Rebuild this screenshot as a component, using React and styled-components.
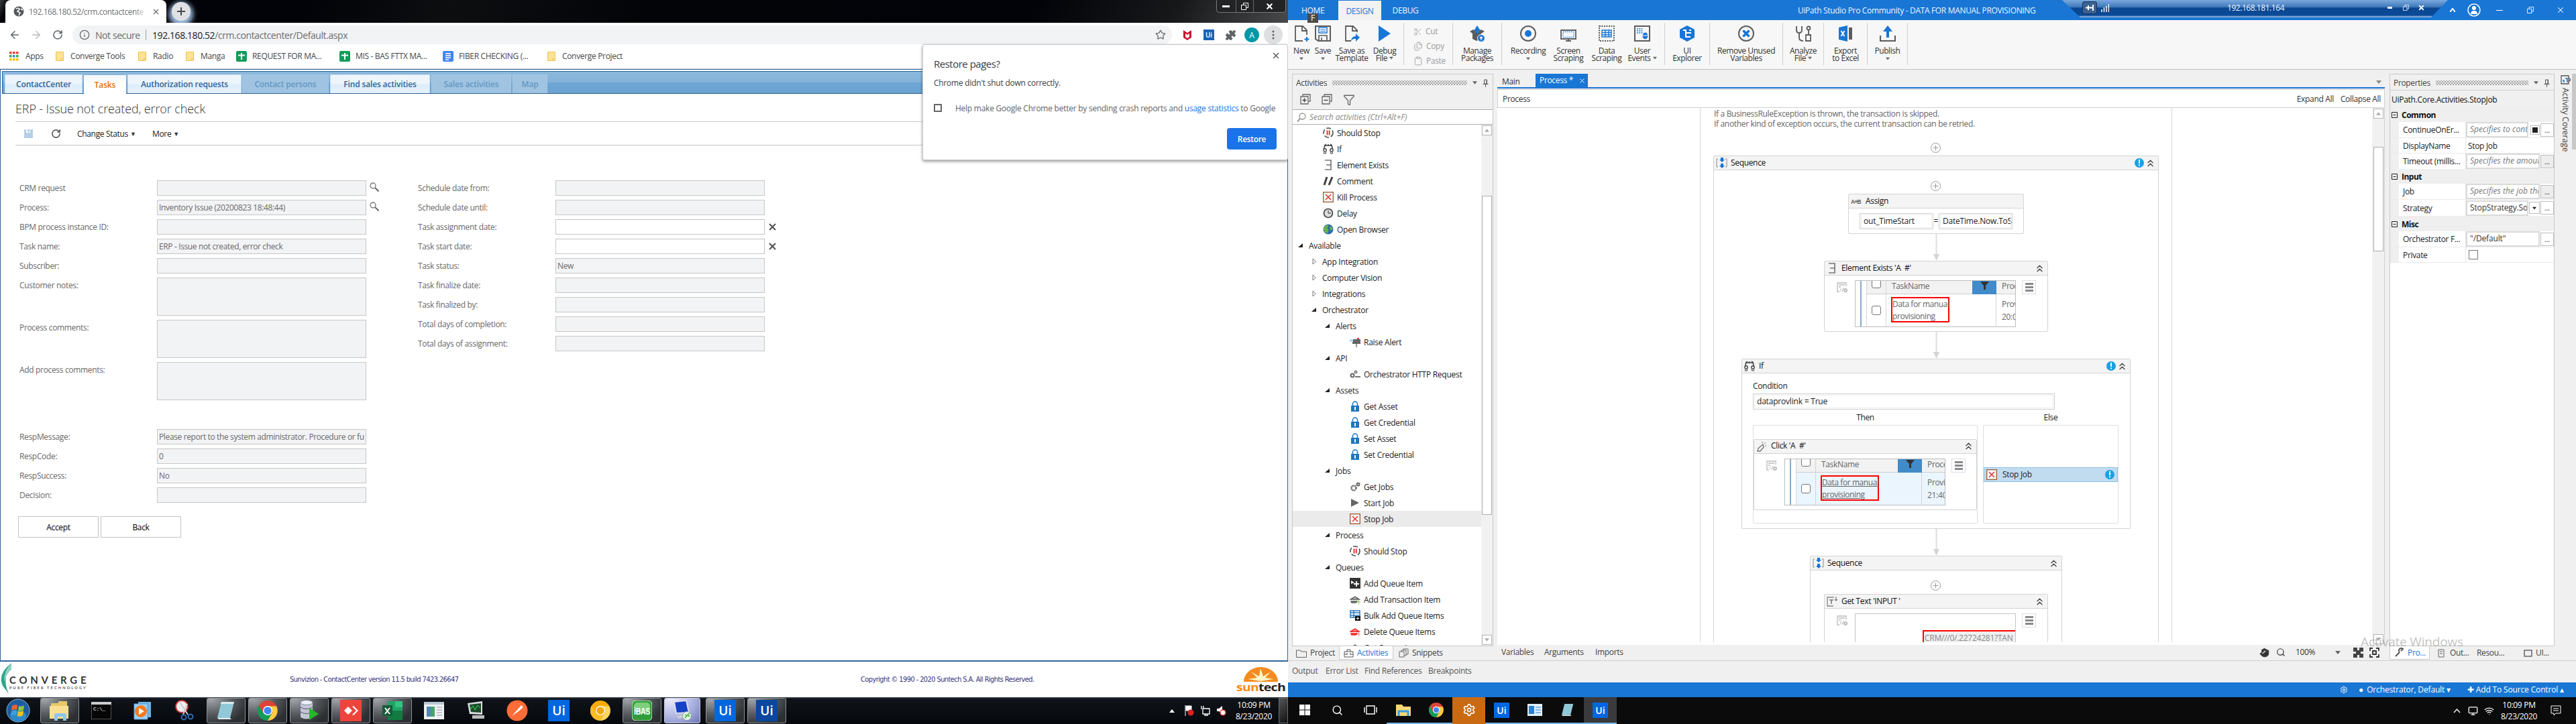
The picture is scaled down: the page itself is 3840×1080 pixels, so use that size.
import React from "react";
import styled, { createGlobalStyle, css } from "styled-components";
import { ArrowLeft, ArrowRight, RotateCw, Star, Puzzle, Search, Scissors, Files, Clipboard, Filter, X, Info, ChevronsUp, Settings, Hand, Wifi, Monitor } from "lucide-react";

const Global = createGlobalStyle`
  *{box-sizing:border-box}
  body{margin:0;background:#fff;width:3840px;height:1080px;overflow:hidden;
    font-family:"Open Sans","Noto Sans",sans-serif;font-size:12px;letter-spacing:-.33px;color:#222}
  svg{display:block;flex:none}
`;

const Screens = styled.div`display:flex;width:3840px;height:1080px;overflow:hidden;white-space:nowrap;`;
const Desktop = styled.div`position:relative;width:1920px;height:1080px;display:flex;flex-direction:column;overflow:hidden;`;

/* ---------- browser ---------- */
const TabStrip = styled.div`
  height:34px;flex:none;display:flex;padding-left:8px;
  background:linear-gradient(115deg,#3a3b3d 0,#020308 14px,#020308 24%,#0d0e10 35%,#030408 50%,#020308 80%,#17181a 91%,#48494b 100%);
`;
const BrowserTab = styled.div`
  width:240px;height:34px;background:#fff;border-radius:8px 8px 0 0;display:flex;align-items:center;padding-left:12px;color:#6a6d70;
`;
const TabTitle = styled.div`
  width:176px;margin:0 7px;overflow:hidden;letter-spacing:-.5px;
  mask-image:linear-gradient(90deg,#000 90%,transparent);
`;
const NewTab = styled.div`
  width:28px;height:28px;margin:3px 0 0 8px;border-radius:50%;background:#dfe1e4;display:grid;place-items:center;box-shadow:0 4px 7px 4px #9dbbe0;
`;
const WinControls = styled.div`
  display:flex;margin-left:auto;margin-right:3px;width:104px;height:19px;border:1px solid #77797b;border-top:0;border-radius:0 0 5px 5px;background:#222325;
`;
const WinBtn = styled.div`
  width:${p => p.$w}px;display:grid;place-items:center;border-right:1px solid #66686a;&:last-child{border:0}
`;
const Toolbar = styled.div`height:36px;flex:none;display:flex;align-items:center;padding-left:6px;background:#fff;`;
const ToolCell = styled.div`width:32px;height:28px;display:grid;place-items:center;color:${p => p.$c || "#5f6368"};`;
const Address = styled.div`
  width:1639px;height:28px;margin:0 7px 0 6px;border-radius:14px;background:#f1f3f4;display:flex;align-items:center;padding:0 9px 0 10px;font-size:14px;color:#6a6e72;letter-spacing:-.42px;
  b{font-weight:400;color:#202124} span{width:66px;margin-left:8px} i{width:1px;height:16px;background:#9aa0a6;margin:0 9px 0 9px} svg:last-child{margin-left:auto}
`;
const Avatar = styled.div`width:22px;height:22px;border-radius:50%;background:#0097a7;color:#fff;display:grid;place-items:center;font-size:12px;`;
const MenuDots = styled.div`width:28px;height:28px;border-radius:50%;background:#dedfe0;display:grid;place-items:center;`;
const Bookmarks = styled.div`height:33px;flex:none;padding:0 0 5px 14px;display:flex;align-items:center;border-bottom:1px solid #d4d6d9;background:#fff;color:#45484c;`;
const Bookmark = styled.div`width:${p => p.$w}px;display:flex;align-items:center;gap:${p => p.$g || 8}px;`;
const UiBadge = styled.div`
  width:${p => p.$s}px;height:${p => p.$s}px;background:${p => p.$bg || "#0067df"};color:#fff;display:grid;place-items:center;
  font:600 ${p => Math.round(p.$s * .6)}px "Open Sans",sans-serif;letter-spacing:0;
`;

const Popup = styled.div`
  position:absolute;left:1375px;top:66px;width:545px;height:173px;background:#fff;border:1px solid #c4c6c9;border-radius:3px;box-shadow:0 2px 4px rgba(0,0,0,.4);
  padding:18px 16px 0 16px;display:flex;flex-direction:column;
`;
const PopTitle = styled.div`font-size:15px;letter-spacing:-.5px;line-height:20px;color:#3a3c40;display:flex;justify-content:space-between;svg{margin:-9px -6px 0 0}`;
const PopText = styled.div`margin-top:10px;line-height:17px;color:#3c4043;letter-spacing:-.24px;`;
const PopCheck = styled.div`margin-top:20px;display:flex;align-items:center;gap:20px;color:#5f6368;height:18px;letter-spacing:-.25px;a{color:#1a73e8}`;
const Box = styled.div`width:${p => p.$s || 12}px;height:${p => p.$s || 12}px;border:${p => p.$b || 2}px solid ${p => p.$c || "#767676"};border-radius:${p => p.$r || 0}px;background:#fff;flex:none;`;
const RestoreBtn = styled.div`align-self:flex-end;margin-top:21px;width:74px;height:32px;border-radius:4px;background:#1a73e8;color:#fff;font-weight:600;display:grid;place-items:center;`;

/* ---------- CRM page ---------- */
const Page = styled.div`height:884px;flex:none;border:1px solid #31659c;border-bottom:2px solid #31659c;padding:2px 2px 0;background:#fff;`;
const Nav = styled.div`
  position:relative;height:34px;border:1px solid #2f6394;display:flex;align-items:flex-end;padding-left:3px;
  background:linear-gradient(#8cb8dc,#84b2d9 48%,#6da6d4 52%,#6ba3d1);
  font:600 12px "Open Sans",sans-serif;letter-spacing:-.15px;
`;
const NavTab = styled.div`
  width:${p => p.$w}px;height:28px;margin-right:${p => p.$m || 2}px;display:grid;place-items:center;
  ${p => p.$kind === "off" ? css`background:#9fc3e1;color:#6598c2;border:1px solid #a8c9e5;border-bottom:0;`
    : p.$kind === "on" ? css`background:linear-gradient(#f2f6f9,#fff 50%);color:#e0720c;margin-bottom:-1px;`
    : css`background:linear-gradient(#edf5fb 45%,#dcedfb 55%,#e6f2fc);color:#2d6698;border:1px solid #c4def3;border-bottom:0;`}
`;
const PageTitle = styled.div`height:42px;margin:0 16px 0 20px;padding-top:8px;border-bottom:1px solid #c8c8c8;font-size:18px;line-height:28px;font-weight:300;letter-spacing:-.12px;color:#333;`;
const Actions = styled.div`height:35px;margin:0 16px 0 20px;padding-left:13px;border-bottom:1px solid #c8c8c8;display:flex;align-items:center;color:#222;span{font-size:9px;color:#333}`;
const Action = styled.div`width:${p => p.$w}px;display:flex;align-items:center;gap:3px;`;
const Form = styled.div`display:flex;padding:52px 0 0 26px;color:#686868;letter-spacing:-.33px;`;
const FormCol = styled.div`width:594px;`;
const Row = styled.div`height:${p => p.$h || 22}px;margin-bottom:${p => p.$mb || 7}px;display:grid;grid-template-columns:205px 312px 30px;line-height:23px;`;
const Field = styled.div`border:1px solid #c6c6c6;background:${p => (p.$open ? "#fff" : "#f2f3f5")};padding-left:2px;line-height:21px;overflow:hidden;color:#6a6a6a;letter-spacing:-.37px;`;
const Side = styled.div`padding:${p => (p.$x ? "6px 0 0 6px" : "3px 0 0 5px")};`;
const Buttons = styled.div`display:flex;gap:3px;padding:14px 0 0 24px;`;
const Button = styled.div`width:120px;height:32px;border:1px solid #c4c4c4;background:#fff;color:#000;display:grid;place-items:center;`;
const Footer = styled.div`
  height:53px;flex:none;display:grid;grid-template-columns:432px 851px 560px auto;align-items:center;background:#fff;
  font:11px "DejaVu Sans Condensed","DejaVu Sans",sans-serif;letter-spacing:-.6px;color:#34347c;
`;

/* ---------- taskbars ---------- */
const Win7Bar = styled.div`height:40px;flex:none;display:flex;background:linear-gradient(#3d4650 0,#3d4650 1px,#10141a 2px,#05090d 100%);color:#fff;`;
const Task = styled.div`
  width:62px;height:40px;padding:1px 2px;
  >div{height:38px;border-radius:3px;display:grid;place-items:center;
  ${p => p.$on && css`background:radial-gradient(ellipse at 10% 0,#a5a9ad,#585c60 45%,#2c3033 80%);border:1px solid #8d9296;`}
  ${p => p.$bright && css`background:radial-gradient(ellipse at 20% 0,#eef,#a7aede 60%,#6d76b5);border:1px solid #ccd;width:54px;`}}
`;
const StartCell = styled.div`width:58px;display:grid;place-items:center;padding-right:4px;`;
const Tray = styled.div`margin-left:auto;display:flex;align-items:center;`;
const TrayCell = styled.div`width:${p => p.$w || 24}px;display:grid;place-items:center;font-size:9px;`;
const Clock = styled.div`width:${p => p.$w || 74}px;text-align:center;line-height:17px;letter-spacing:-.3px;color:#fff;`;
const ShowDesk = styled.div`width:14px;height:38px;border:1px solid #6a6f75;background:linear-gradient(135deg,#555,#111);`;
const Win10Bar = styled.div`height:40px;flex:none;display:flex;background:#0b0b0c;color:#fff;`;
const Cell10 = styled.div`width:49px;height:40px;display:grid;place-items:center;background:${p => p.$bg || "none"};border-bottom:2px solid ${p => (p.$run ? "#76b9ed" : "transparent")};`;

/* ---------- studio ---------- */
const TitleBar = styled.div`position:relative;height:30px;flex:none;background:#1976d4;color:#eef5fd;display:flex;padding-left:20px;line-height:31px;>*{flex:none}`;
const Menu = styled.div`
  width:${p => p.$w}px;text-align:center;letter-spacing:-.35px;
  ${p => p.$on && css`background:#f2f2f2;color:#1976d4;margin-top:1px;`}
`;
const KeyTip = styled.div`position:absolute;left:29px;top:20px;width:16px;height:14px;background:#4b4b4b;color:#fff;line-height:14px;text-align:center;z-index:2;`;
const AppTitle = styled.div`margin-left:557px;width:360px;letter-spacing:-.33px;`;
const RdpBar = styled.div`
  margin-left:34px;width:575px;height:26px;
  clip-path:polygon(0 0,100% 0,550px 26px,27px 26px);
  background:linear-gradient(#7aa9dd,#3f78bb 40%,#0b4790 46%,#0a4a98 88%,#8fb0d8 96%);
  display:flex;align-items:center;line-height:24px;padding-left:30px;padding-bottom:3px;>*{flex:none}
`;
const PinBtn = styled.div`width:22px;height:19px;border:1px solid #1b3157;border-radius:3px;background:#3b618f;display:grid;place-items:center;margin-right:6px;`;
const RdpText = styled.div`width:82px;margin:0 144px 0 176px;letter-spacing:-.45px;`;
const Caption = styled.div`width:${p => p.$w}px;display:grid;place-items:center;color:#fff;`;

const Ribbon = styled.div`height:74px;flex:none;background:#f7f7f7;border-bottom:1px solid #c0c0c0;display:flex;padding:4px 0 0 5px;`;
const Tool = styled.div`
  width:${p => p.$w}px;margin:${p => p.$m || 0};height:60px;display:flex;flex-direction:column;align-items:center;color:#333;line-height:11px;text-align:center;letter-spacing:-.42px;
  >svg{height:24px;margin:4px 0 8px}
  small{padding-top:4px}
`;
const ToolLine = styled.div`display:flex;align-items:center;justify-content:center;gap:3px;`;
const Rule = styled.div`width:1px;height:63px;background:#cfcfcf;margin-left:${p => p.$ml || 0}px;`;
const EditGroup = styled.div`width:72px;padding:2px 0 0 13px;color:#9b9b9b;div{display:flex;align-items:center;gap:5px;height:22px;margin-left:1px;line-height:20px}`;
const Work = styled.div`height:881px;flex:none;background:#f0f0f0;display:flex;padding:6px 0 0 6px;`;
const Panel = styled.div`width:${p => p.$w}px;height:875px;display:flex;flex-direction:column;`;
const PanelBody = styled.div`border:1px solid #c9c9c9;height:854px;display:flex;flex-direction:column;overflow:hidden;background:${p => p.$bg || "#f0f0f0"};`;
const PanelHead = styled.div`height:23px;flex:none;display:flex;align-items:center;padding:2px 6px 0 5px;background:#f0f0f0;color:#444;gap:8px;`;
const Dots = styled.div`flex:1;height:7px;background:radial-gradient(#a4a4a4 .8px,transparent 1px) 0 0/4px 4px,radial-gradient(#a4a4a4 .8px,transparent 1px) 2px 2px/4px 4px;`;
const ActTools = styled.div`height:30px;flex:none;display:flex;align-items:center;gap:15px;padding-left:11px;border-bottom:1px solid #adadad;`;
const SearchBox = styled.div`height:22px;flex:none;display:flex;align-items:center;gap:5px;padding-left:6px;background:#fff;border-bottom:1px solid #adadad;color:#8a8a8a;font-style:italic;letter-spacing:-.05px;`;
const TreeWrap = styled.div`flex:1;display:flex;background:#fff;overflow:hidden;`;
const Tree = styled.div`width:281px;color:#1d1d1d;letter-spacing:-.27px;`;
const Node = styled.div`height:24px;display:flex;align-items:center;padding-left:${p => p.$x}px;background:${p => (p.$on ? "#ebebeb" : "none")};`;
const Glyph = styled.div`width:${p => p.$w}px;height:16px;display:flex;align-items:center;`;
const Scroll = styled.div`width:${p => p.$w || 17}px;background:#f1f1f1;display:flex;flex-direction:column;align-items:center;padding:1px 0;`;
const ScrollBtn = styled.div`width:15px;height:15px;border:1px solid #b4b4b4;background:#fff;display:grid;place-items:center;margin-top:${p => p.$mt || 0};`;
const Thumb = styled.div`width:15px;height:${p => p.$h}px;margin-top:${p => p.$mt}px;border:1px solid #adadad;background:#fff;`;
const Tabs = styled.div`height:20px;display:flex;line-height:20px;color:#444;`;
const BTab = styled.div`width:${p => p.$w}px;display:flex;align-items:center;gap:5px;padding-left:${p => p.$pl || 6}px;${p => p.$on && css`background:#fff;color:#1976d4;border:1px solid #c9c9c9;border-top:0;`}`;

const Center = styled.div`width:1323px;margin-left:6px;display:flex;flex-direction:column;`;
const DocTabs = styled.div`height:22px;border-bottom:2px solid #1976d4;display:flex;line-height:24px;color:#333;`;
const DocTab = styled.div`width:78px;background:#1976d4;color:#fff;display:flex;align-items:center;padding-left:6px;gap:8px;line-height:20px;`;
const Crumb = styled.div`height:28px;flex:none;margin-top:1px;background:#fff;border:1px solid #d0d0d0;display:flex;align-items:center;padding:0 5px 0 7px;color:#333;gap:10px;span{flex:1}`;
const CanvasWrap = styled.div`height:801px;flex:none;display:flex;background:#fff;border-right:1px solid #d0d0d0;`;
const Canvas = styled.div`width:1305px;height:797px;overflow:hidden;padding-left:302px;`;
const Frame = styled.div`width:704px;height:900px;border:1px solid #d6d6d6;border-width:0 1px;display:flex;flex-direction:column;align-items:center;color:#222;`;
const Note = styled.div`align-self:flex-start;margin-left:20px;height:31px;padding-top:1px;line-height:15px;color:#666;`;
const PlusWrap = styled.div`padding:${p => p.$t}px 0 ${p => p.$b}px;height:${p => p.$t + p.$b + 15}px;margin-left:-2px;`;
const Card = styled.div`width:${p => p.$w}px;height:${p => p.$h}px;flex:none;border:1px solid #d3d3d3;border-radius:2px;background:#fff;`;
const CardHead = styled.div`
  height:21px;display:flex;align-items:center;background:#f4f4f4;border-bottom:1px solid #d3d3d3;padding:0 3px;color:#111;
  >span{flex:1;padding-bottom:2px;white-space:pre}
`;
const CardIcon = styled.div`width:${p => p.$w || 22}px;`;
const CardCol = styled.div`display:flex;flex-direction:column;align-items:center;`;
const Expr = styled.div`width:${p => p.$w}px;height:24px;border:1px solid #cfcfcf;outline:1px solid #ededed;outline-offset:-3px;line-height:21px;padding:0 5px;background:#fff;overflow:hidden;letter-spacing:-.2px;`;
const AssignRow = styled.div`display:flex;padding:7px 0 0 16px;line-height:24px;span{width:8px;text-align:center;letter-spacing:0}`;
const ShotRow = styled.div`display:flex;padding:7px 0 0 18px;`;
const ShotToolBox = styled.div`padding-top:3px;`;
const Shot = styled.div`
  width:240px;height:${p => p.$h || 70}px;margin:0 9px 0 11px;border:1px solid #bdbdbd;overflow:hidden;color:#666;
  display:grid;grid-template-columns:9px 8px 29px ${p => p.$c || 128}px 36px 40px;grid-template-rows:20px 50px;
`;
const SCell = styled.div`
  border-right:${p => (p.$nb ? 0 : 1)}px solid #d5d5d5;padding:${p => p.$pt || 0}px 0 0 ${p => p.$p || 0}px;line-height:19px;overflow:hidden;
  ${p => p.$hd && css`background:#f2f2f2;border-bottom:1px solid #cdcdcd;line-height:15px;`}
  ${p => p.$tint && css`background:#eaf5fe;`}
  ${p => p.$edge && css`border-right:2px solid #87aac8;`}
  ${p => p.$flt && css`background:#428bca;display:flex;justify-content:center;border:0;`}
`;
const Tick = styled(Box)`margin-top:${p => p.$mt}px;`;
const RedBox = styled.div`width:87px;height:38px;margin-top:4px;border:2px solid #f00;line-height:18px;margin-left:-1px;text-decoration:${p => (p.$u ? "underline" : "none")};letter-spacing:-.42px;`;
const Burger = styled.div`width:21px;height:21px;border:1px solid #dcdce6;display:flex;flex-direction:column;justify-content:center;align-items:center;gap:2px;i{width:12px;height:3px;background:#888}`;
const IfBody = styled.div`padding:11px 16px 0;`;
const CondLabel = styled.div`height:19px;line-height:16px;`;
const Branches = styled.div`display:grid;grid-template-columns:335px 202px;gap:8px;text-align:center;line-height:23px;`;
const Branch = styled.div`height:147px;border:1px solid #dedede;border-radius:2px;text-align:left;display:flex;flex-direction:column;justify-content:center;`;
const StopCard = styled.div`height:22px;background:#c1dcef;border:1px solid #8fc1e6;display:flex;align-items:center;padding:0 3px;span{flex:1;padding-left:8px}`;
const ZoomBar = styled.div`display:flex;align-items:center;margin-left:auto;padding-right:8px;color:#333;`;
const ZItem = styled.div`width:${p => p.$w}px;line-height:20px;`;
const InputShot = styled.div`width:240px;height:90px;margin:0 9px 0 11px;border:1px solid #c4c4c4;overflow:hidden;padding:24px 0 0 100px;`;
const RedInput = styled.div`width:200px;height:60px;border:2px solid #f00;background:#efefef;color:#888;padding-left:1px;line-height:19px;letter-spacing:-.25px;`;

const PropHead = styled.div`height:26px;flex:none;padding-left:2px;line-height:27px;border-top:1px solid #d0d0d0;background:#f0f0f0;color:#111;letter-spacing:-.28px;`;
const Cat = styled.div`height:${p => p.$h}px;background:#efefef;display:flex;align-items:center;gap:6px;padding-left:2px;font-weight:700;color:#111;letter-spacing:-.5px;`;
const Prop = styled.div`
  height:${p => p.$h}px;display:grid;grid-template-columns:13px 100px 1fr;background:#fff;align-items:center;color:#222;
  >div{height:100%;display:flex;align-items:center;border-bottom:1px solid #ebebeb;}
  >div:first-child{background:#efefef} >div:nth-child(2){padding-left:6px;border-right:1px solid #e6e6e6}
`;
const PText = styled.span`padding-left:3px;`;
const PInput = styled.div`flex:1;height:23px;border:2px solid #dadada;background:#fff;line-height:18px;padding-left:4px;overflow:hidden;width:0;color:#333;letter-spacing:-.15px;${p => p.$ph && css`font-style:italic;color:#777;letter-spacing:.05px;`}`;
const PBtn = styled.div`width:${p => p.$w || 20}px;height:${p => p.$h || 20}px;border:1px solid #bdbdbd;background:${p => p.$bg || "#fff"};display:grid;place-items:center;margin-left:${p => p.$ml || 1}px;font-size:10px;letter-spacing:0;line-height:12px;`;
const SideDock = styled.div`margin-left:auto;width:33px;display:flex;`;
const Vertical = styled.div`width:26px;padding:2px 0 0 9px;div{writing-mode:vertical-rl;margin-top:5px;line-height:15px;color:#444;letter-spacing:0}`;
const DockStrip = styled.div`width:7px;height:113px;background:#c8c8c8;`;
const Watermark = styled.div`position:absolute;left:1599px;top:944px;font-size:19px;color:rgba(120,120,120,.45);letter-spacing:-.2px;`;
const OutTabs = styled.div`height:33px;flex:none;display:flex;padding:5px 0 0 6px;border-top:1px solid #cfcfcf;background:#f0f0f0;color:#555;letter-spacing:-.25px;line-height:19px;`;
const OutTab = styled.div`width:${p => p.$w}px;`;
const Status = styled.div`height:22px;flex:none;background:#1976d4;color:#fff;display:flex;justify-content:flex-end;align-items:center;line-height:22px;padding-right:18px;letter-spacing:-.15px;`;
const StatusItem = styled.span`margin-left:${p => p.$ml}px;`;

/* ---------- small drawings ---------- */
const S = ({ w = 16, h = w, vb, children, ...r }) => <svg width={w} height={h} viewBox={vb || `0 0 ${w} ${h}`} fill="none" {...r}>{children}</svg>;
const Folder = () => <S w={12} h={14}><path d="M.5.5h11v13H.5z" fill="#fde293" stroke="#eac54f" /><path d="M8 13.500v-3h3.500" stroke="#eac54f" /></S>;
const Sheet = () => <S w={16}><rect width="16" height="16" rx="2" fill="#0f9d58" /><path d="M8 3v10M3 6.500h10" stroke="#fff" strokeWidth="2" /></S>;
const DocIcon = () => <S w={16}><rect width="16" height="16" rx="2" fill="#4285f4" /><path d="M4 4h8M4 7h8M4 10h8M4 13h5" stroke="#fff" strokeWidth="1.500" /></S>;
const AppsIcon = () => <S w={14} h={14}>{["#ea4335", "#34a853", "#fbbc04"].map((c, r) => [0, 1, 2].map(k => <rect key={r + "" + k} x={k * 5} y={r * 5} width="3.500" height="3.500" fill={r === 1 && k === 1 ? "#4285f4" : c} />))}</S>;
const Tri = ({ c = "#666", w = 7, up }) => <S w={w} h={5} vb="0 0 8 5"><path d={up ? "M0 5h8L4 0z" : "M0 0h8L4 5z"} fill={c} /></S>;
const Pushpin = () => <S w={9} h={12}><path d="M2.500 1h4v6h-4zM.5 7.500h8M4.500 8v4M6 1v6" stroke="#555" /></S>;
const Chev = () => <ChevronsUp size={17} color="#444" strokeWidth={1.8} />;
const Alert = () => <S w={16}><circle cx="8" cy="8" r="7" fill="#1ba1e2" /><path d="M8 3v6M8 10.500v2" stroke="#fff" strokeWidth="2" /></S>;
const Plus = ({ t, b }) => <PlusWrap $t={t} $b={b}><S w={15}><circle cx="7.500" cy="7.500" r="7" stroke="#999" /><path d="M7.500 3.500v8M3.500 7.500h8" stroke="#999" /></S></PlusWrap>;
const Arrow = () => <S w={9} h={40}><path d="M4.500 0v32" stroke="#dcdcdc" strokeWidth="2" /><path d="M0 30h9l-4.500 10z" fill="#d4d4d4" /></S>;
const SeqIcon = () => <S w={17}><path d="M3 2H1v12h2M14 2h2v12h-2" stroke="#888" /><path d="M7 0h4v3h2L9 7 5 3h2zM7 9h4v3h2l-4 4-4-4h2z" fill="#1976d4" /></S>;
const IfIcon = () => <S w={16}><path d="M2 9V6q0-3 4-3h4q4 0 4 3v3M8 1v3M2 3l3-2M14 3l-3-2" stroke="#444" strokeWidth="1.500" /><circle cx="3" cy="10" r="2.200" stroke="#444" strokeWidth="1.400" /><circle cx="13" cy="10" r="2.200" stroke="#444" strokeWidth="1.400" /><path d="M1.500 13v2h3v-2M11.500 13v2h3v-2" stroke="#444" /></S>;
const ExistsIcon = () => <S w={16}><path d="M3 1h9v14H3M5 8h7" stroke="#777" strokeWidth="1.700" /></S>;
const StopIcon = () => <S w={16}><rect x=".7" y=".7" width="14.600" height="14.600" fill="#fff" stroke="#a2603c" strokeWidth="1.400" /><path d="M4 4l8 8M12 4l-8 8" stroke="#d33" strokeWidth="1.600" /></S>;
const ShouldStop = () => <S w={16}><circle cx="8" cy="8" r="7" stroke="#444" strokeWidth="1.500" strokeDasharray="7 3" /><path d="M6.500 4.500v7M9.700 4.500v7" stroke="#e22" strokeWidth="1.800" /></S>;
const CommentIcon = () => <S w={16}><path d="M2 14L6 2M9 14l5-12" stroke="#444" strokeWidth="3" /></S>;
const DelayIcon = () => <S w={16}><circle cx="8" cy="8" r="6.500" stroke="#444" strokeWidth="1.700" fill="#ddd" /><path d="M8 4v4h4" stroke="#333" /></S>;
const GlobeIcon = ({ w = 16 }) => <S w={w} vb="0 0 16 16"><circle cx="8" cy="8" r="7.500" fill="#2c6cb0" /><path d="M1 6q4-6 7-4 0 3-2 4 4 2 1 8Q1 13 1 6zM11 3l4 4-3 3-2-3z" fill="#69b34c" /></S>;
const LockIcon = () => <S w={16}><path d="M4.500 7V4.500a3.500 3.500 0 017 0V7" stroke="#1f76c2" strokeWidth="1.500" /><rect x="2" y="7" width="12" height="9" fill="#1f76c2" /><path d="M8 9v5" stroke="#fff" strokeWidth="2" /></S>;
const GearsIcon = () => <S w={16}><circle cx="6" cy="10" r="3.500" stroke="#666" strokeWidth="2.500" strokeDasharray="2 .8" /><circle cx="12.500" cy="4.500" r="2" stroke="#666" strokeWidth="2" /></S>;
const HttpIcon = () => <S w={16}><circle cx="4" cy="10" r="2.500" stroke="#666" strokeWidth="2" /><circle cx="9" cy="5" r="1.700" stroke="#666" strokeWidth="1.500" /><path d="M8 12h8" stroke="#777" strokeWidth="2" /></S>;
const PlayIcon = () => <S w={16}><path d="M2 2l12 6-12 6z" fill="#666" /></S>;
const AlertBox = () => <S w={16}><path d="M4 4h12v7H4z" fill="#666" /><path d="M9 11h2v5H9z" fill="#999" /><path d="M0 4h5v4H0z" fill="#bcd8ee" /><path d="M11 2h3v2h-3z" fill="#e33" /></S>;
const QueueIcon = () => <S w={16}><rect width="16" height="16" fill="#333" /><path d="M2 4l5 3-5 2z" fill="#fff" /><path d="M10 5v8M6 9h8" stroke="#fff" strokeWidth="2" /></S>;
const TransIcon = ({ c = "#555", a = "#8c4" }) => <S w={16}><path d="M1 8l7-4 6 4H1zM2 11h9l-2 2H3z" stroke={c} fill={c} fillOpacity=".4" strokeWidth="1.300" /><path d="M13.500 9v6M10.500 12h6" stroke={a} /></S>;
const BulkIcon = () => <S w={16}><path d="M1 1h14v10H1zM1 4h14M1 8h14M6 1v10" stroke="#2a7ac0" strokeWidth="1.500" /><rect x="8" y="9" width="8" height="7" fill="#111" /><path d="M12 10.500v4M10 12.500h4" stroke="#fff" /></S>;
const ExpandedArrow = () => <S w={7} h={7}><path d="M7 0v6H0z" fill="#222" /></S>;
const CollapsedArrow = () => <S w={7} h={10}><path d="M1 1l4.500 4L1 9z" stroke="#777" /></S>;
const ShotTool = () => <S w={16}><path d="M14 6V1H1v13h3M3 4h9M3 7h3" stroke="#bbb" strokeWidth="1.300" /><path d="M7 9l-2 2 2 2M10 8l-2 6" stroke="#bbb" /><circle cx="13" cy="12" r="2" stroke="#bbb" strokeWidth="2" /></S>;
const ClickIcon = () => <S w={16}><path d="M5 9l5-4 1 4-5 6-4 0 1-4z" stroke="#777" strokeWidth="1.400" /><path d="M9 3V1M12 4l2-2M13 7h2" stroke="#777" /></S>;
const TextIcon = () => <S w={16}><path d="M11 2H1v13h9M14 1v6m-2-2l2 2 2-2" stroke="#888" strokeWidth="1.300" /><path d="M4 6h6M7 6v6" stroke="#777" strokeWidth="1.500" /></S>;
const Restore = ({ c = "#fff", w = 11 }) => <S w={w} vb="0 0 11 11"><path d="M.5 3.500h7v7h-7zM3.500 3V.5h7v7H8" stroke={c} /></S>;
const Dash = ({ w = 10, h = 2 }) => <S w={w} h={h}><rect width={w} height={h} fill="#fff" /></S>;
const ChromeLogo = ({ w = 30, a = "#db4437", b = "#0f9d58", c = "#ffcd40", m = "#4285f4" }) => <S w={w} vb="0 0 32 32"><circle cx="16" cy="16" r="16" fill={a} /><path d="M2 8a16 16 0 0014 24l7-12h-14z" fill={b} /><path d="M16 32a16 16 0 0014-23H16l8 9z" fill={c} /><circle cx="16" cy="16" r="7.500" fill="#fff" /><circle cx="16" cy="16" r="6" fill={m} /></S>;
const FolderBig = ({ w = 32 }) => <S w={w} vb="0 0 32 32"><path d="M3 5h10l2-3h12v24H3z" fill="#e9c867" /><path d="M1 9h28v19H1z" fill="#f7e08f" /><path d="M8 31v-8q0-3 3-3h12q3 0 3 3v8h-5v-6h-8v6z" fill="#8cc6ec" /></S>;
const Notepad = () => <S w={32}><path d="M9 3h19l-6 24H3z" fill="#8fc9d8" /><path d="M9 3h19l-1 3H8z" fill="#dcebef" /><path d="M3 27h19l2 2H5z" fill="#e6eef0" /></S>;
const Orb = () => <S w={36}><circle cx="18" cy="18" r="17" fill="#1f5d9e" stroke="#8eb9dc" /><ellipse cx="18" cy="26" rx="12" ry="8" fill="#39a6e0" opacity=".6" /><path d="M9 11q4-3 8-1l-1 7q-4-2-8 1z" fill="#f0642d" /><path d="M19 11q4 2 8-1l-1 7q-4 3-8 1z" fill="#8fc63f" /><path d="M8 19q4-3 8-1l-1 7q-4-2-8 1z" fill="#3c9fe0" /><path d="M18 19q4 2 8-1l-1 7q-4 3-8 1z" fill="#fbc21a" /></S>;
const GlobeGray = () => <S w={16}><circle cx="8" cy="8" r="7.500" fill="#55585c" /><path d="M4 4q4-2 5 1l-3 3 4 2-2 4M11 4l3 2" stroke="#fff" strokeWidth="1.600" /></S>;

const taskIcons = [
  [<FolderBig />, 1],
  [<S w={30} h={26}><rect width="30" height="26" fill="#060606" stroke="#999" /><rect width="30" height="4" fill="#ccc" /><text x="3" y="13" fontSize="8" fill="#fff" fontFamily="Liberation Mono">C:\_</text></S>, 0],
  [<S w={30}><path d="M8 2h19v23H8z" fill="#6fb4e6" /><path d="M2 5h20v23H2z" fill="#9fd0f4" stroke="#5a9bd0" /><circle cx="12" cy="16" r="9" fill="#f47b20" /><path d="M9 11l8 5-8 5z" fill="#fff" /></S>, 0],
  [<S w={32}><ellipse cx="12" cy="10" rx="9" ry="9" fill="#eee" stroke="#c33" strokeWidth="2" /><path d="M8 2l13 20M20 6L14 22" stroke="#ccc" strokeWidth="2" /><circle cx="15" cy="26" r="3.500" stroke="#2d6bb5" strokeWidth="2" /><circle cx="25" cy="25" r="3.500" stroke="#2d6bb5" strokeWidth="2" /></S>, 0],
  [<Notepad />, 1],
  [<ChromeLogo />, 1],
  [<S w={32}><path d="M3 4v22q9 5 18 0V4z" fill="#c3c5d6" /><ellipse cx="12" cy="4" rx="9" ry="3.500" fill="#eceefa" stroke="#889" /><path d="M3 11q9 5 18 0M3 18q9 5 18 0" stroke="#556" /><path d="M16 12l14 9-14 9z" fill="#27b72c" /></S>, 1],
  [<S w={32}><rect width="32" height="32" fill="#ef443b" /><path d="M12 10l6 6-6 6-6-6z" fill="#fff" /><path d="M18 10l2-1 7 7-7 7-2-1 6-6z" fill="#fff" /></S>, 1],
  [<S w={32}><path d="M9 2h22v28H9z" fill="#21a366" /><path d="M20 2h11v9H20z" fill="#33c481" /><path d="M9 16h22v14H9z" fill="#107c41" /><rect x="1" y="8" width="15" height="16" fill="#185c37" /><path d="M5 12l7 9M12 12l-7 9" stroke="#fff" strokeWidth="2" /></S>, 1],
  [<S w={30} h={26}><rect width="30" height="26" fill="#eef2f4" /><rect width="30" height="4" fill="#b9c8d2" /><rect x="4" y="7" width="12" height="15" fill="#4f87b4" /><rect x="10" y="7" width="6" height="15" fill="#4ba36a" /><path d="M19 8h8M19 12h8M19 16h8M19 20h8" stroke="#999" /></S>, 0],
  [<S w={30}><path d="M3 4l22-3v20L6 20z" fill="#d8dcdc" /><path d="M6 6l17-2v14L8 17z" fill="#1c4a27" /><path d="M7 13l4-5 3 6 4-7 4 4" stroke="#3d6" /><path d="M10 22h18v5H10z" fill="#bbb" /></S>, 0],
  [<S w={32}><circle cx="16" cy="16" r="15.500" fill="#ff6c37" /><path d="M8 24l8-9 6-7 3 3-7 6z" fill="#fff" /></S>, 0],
  [<UiBadge $s={32}>Ui</UiBadge>, 0],
  [<ChromeLogo a="#f9ab00" b="#fbbc24" c="#fdd663" m="#f2a600" />, 0],
  [<S w={30}><rect width="30" height="30" rx="6" fill="#2f9e3a" stroke="#dfd" /><rect x="3" y="3" width="24" height="15" rx="5" fill="#7fcf7c" /><text x="3" y="21" fontSize="15" fontWeight="700" fill="#fff" fontFamily="Liberation Sans" textLength="24" lengthAdjust="spacingAndGlyphs">iBAS</text></S>, 1],
  [<S w={32}><path d="M4 3l18-2 4 18-19 1z" fill="#1740c8" stroke="#dde" strokeWidth="2" /><path d="M8 24l10-2 1 4-9 2z" fill="#ccc" /><circle cx="23" cy="24" r="6.500" fill="#e8f5e8" stroke="#999" /><path d="M20 22l3 2-3 3M27 20l-3 2 3 3" stroke="#2a2" strokeWidth="1.500" /></S>, 2],
  [<UiBadge $s={32}>Ui</UiBadge>, 1],
  [<UiBadge $s={32} $bg="#0a479e">Ui</UiBadge>, 1],
];

const navTabs = [["ContactCenter", 116, "", 2], ["Tasks", 63, "on", 2], ["Authorization requests", 170, "", 1], ["Contact persons", 129, "off", 2], ["Find sales activities", 149, "", 2], ["Sales activities", 119, "off", 2], ["Map", 52, "off", 2]];
const leftFields = [["CRM request", "", 22, 7, 1], ["Process:", "Inventory Issue (20200823 18:48:44)", 22, 7, 1], ["BPM process instance ID:", ""], ["Task name:", "ERP - Issue not created, error check"], ["Subscriber:", ""], ["Customer notes:", "", 57, 6], ["Process comments:", "", 57, 6], ["Add process comments:", "", 57, 43], ["RespMessage:", "Please report to the system administrator. Procedure or fu"], ["RespCode:", "0"], ["RespSuccess:", "No"], ["Decision:", ""]];
const rightFields = ["Schedule date from:", "Schedule date until:", "Task assignment date:", "Task start date:", "Task status:", "Task finalize date:", "Task finalized by:", "Total days of completion:", "Total days of assignment:"];

function Browser() {
  return (
    <Desktop>
      <TabStrip>
        <BrowserTab><GlobeGray /><TabTitle>192.168.180.52/crm.contactcente</TabTitle><X size={13} color="#5f6368" /></BrowserTab>
        <NewTab><S w={14}><path d="M7 1v12M1 7h12" stroke="#45484c" strokeWidth="2" /></S></NewTab>
        <WinControls>
          <WinBtn $w={29}><Dash w={11} h={3} /></WinBtn><WinBtn $w={27}><Restore w={11} /></WinBtn><WinBtn $w={47}><X size={13} color="#fff" strokeWidth={4} /></WinBtn>
        </WinControls>
      </TabStrip>
      <Toolbar>
        <ToolCell><ArrowLeft size={18} /></ToolCell><ToolCell $c="#babcbe"><ArrowRight size={18} /></ToolCell><ToolCell><RotateCw size={16} strokeWidth={2.4} /></ToolCell>
        <Address><Info size={16} /><span>Not secure</span><i /><b>192.168.180.52</b>/crm.contactcenter/Default.aspx<Star size={16} /></Address>
        <ToolCell><S w={16}><path d="M2 1l6 4 6-4v11l-6 4-6-4z" fill="#c8102e" /><path d="M5 6l3 2 3-2v5l-3 2-3-2z" fill="#fff" /></S></ToolCell>
        <ToolCell><UiBadge $s={16} $bg="#1c62b5">Ui</UiBadge></ToolCell>
        <ToolCell><Puzzle size={17} fill="#5f6368" strokeWidth={1} /></ToolCell>
        <ToolCell><Avatar>A</Avatar></ToolCell>
        <ToolCell><MenuDots><S w={4} h={14}>{[2, 7, 12].map(y => <circle key={y} cx="2" cy={y} r="1.500" fill="#5f6368" />)}</S></MenuDots></ToolCell>
      </Toolbar>
      <Bookmarks>
        <Bookmark $w={69} $g={10}><AppsIcon />Apps</Bookmark>
        <Bookmark $w={123} $g={10}><Folder />Converge Tools</Bookmark>
        <Bookmark $w={71} $g={10}><Folder />Radio</Bookmark>
        <Bookmark $w={75} $g={10}><Folder />Manga</Bookmark>
        <Bookmark $w={154}><Sheet />REQUEST FOR MA...</Bookmark>
        <Bookmark $w={154}><Sheet />MIS - BAS FTTX MA...</Bookmark>
        <Bookmark $w={156}><DocIcon />FIBER CHECKING (...</Bookmark>
        <Bookmark $w={130} $g={10}><Folder />Converge Project</Bookmark>
      </Bookmarks>
      <Page>
        <Nav>{navTabs.map(([t, w, k, m]) => <NavTab key={t} $w={w} $kind={k} $m={m}>{t}</NavTab>)}</Nav>
        <PageTitle>ERP - Issue not created, error check</PageTitle>
        <Actions>
          <Action $w={40}><S w={13} h={13}><path d="M0 0h3v5h6V0h4v13H0z" fill="#b5cfe6" /><path d="M5 0h3v4H5z" fill="#b5cfe6" /></S></Action>
          <Action $w={39}><RotateCw size={15} strokeWidth={2.600} color="#555" /></Action>
          <Action $w={112}>Change Status<span>▼</span></Action>
          <Action $w={60}>More<span>▼</span></Action>
        </Actions>
        <Form>
          <FormCol>
            {leftFields.map(([l, v, h, mb, s]) => (
              <Row key={l} $h={h} $mb={mb}><div>{l}</div><Field>{v}</Field><Side>{s && <S w={14}><circle cx="5" cy="5" r="4" stroke="#777" strokeWidth="1.300" /><path d="M8 8l5.500 5.500" stroke="#666" strokeWidth="2" /></S>}</Side></Row>
            ))}
          </FormCol>
          <FormCol>
            {rightFields.map((l, i) => (
              <Row key={l}><div>{l}</div><Field $open={i === 2 || i === 3}>{i === 4 ? "New" : ""}</Field><Side $x>{(i === 2 || i === 3) && <S w={11}><path d="M1 1l9 9M10 1l-9 9" stroke="#555" strokeWidth="2.200" /></S>}</Side></Row>
            ))}
          </FormCol>
        </Form>
        <Buttons><Button>Accept</Button><Button>Back</Button></Buttons>
      </Page>
      <Footer>
        <S w={132} h={53}>
          <path d="M17 2Q-4 18 4 36l9 12Q2 24 17 2z" fill="#2aa789" /><path d="M17 2Q6 12 6 30 12 14 17 12z" fill="#8fd0bd" />
          <text x="14" y="33" fontFamily="Lato" fontWeight="700" fontSize="15" fill="#333" textLength="114">CONVERGE</text>
          <text x="14" y="41" fontFamily="Lato" fontWeight="700" fontSize="5.500" fill="#555" textLength="113">PURE FIBER TECHNOLOGY</text>
        </S>
        <div>Sunvizion - ContactCenter version 11.5 build 7423.26647</div>
        <div>Copyright © 1990 - 2020 Suntech S.A. All Rights Reserved.</div>
        <S w={76} h={53}>
          <path d="M11 30a25.500 22 0 0151 0z" fill="#f58a1f" /><path d="M36 29L17 26l14-2-9-9 12 7 2-12 4 12 11-7-8 9 13 2z" fill="#fff6c8" />
          <text x="0" y="44" fontFamily="Open Sans" fontWeight="700" fontSize="16" fill="#f58a1f" textLength="33" lengthAdjust="spacingAndGlyphs">sun</text>
          <text x="33" y="44" fontFamily="Open Sans" fontWeight="700" fontSize="16" fill="#222" textLength="40" lengthAdjust="spacingAndGlyphs">tech</text>
        </S>
      </Footer>
      <Win7Bar>
        <StartCell><Orb /></StartCell>
        {taskIcons.map(([ic, on], i) => <Task key={i} $on={on === 1} $bright={on === 2}><div>{ic}</div></Task>)}
        <Tray>
          <TrayCell $w={26}><Tri up c="#fff" w={8} /></TrayCell>
          <TrayCell><S w={15} h={18}><path d="M2 1v16M3 2h8v7H3z" stroke="#fff" fill="#fff" /><circle cx="10" cy="12" r="4.500" fill="#d22" /></S></TrayCell>
          <TrayCell><S w={15} h={15}><path d="M4 4h10v8H4zM6 14h6M2 0v5M5 0v3" stroke="#fff" strokeWidth="1.300" /></S></TrayCell>
          <TrayCell><S w={15} h={16}><path d="M1 5h3l5-4v12l-5-4H1z" fill="#fff" /><circle cx="10" cy="11" r="4" stroke="#e33" fill="#fff" strokeWidth="1.500" /></S></TrayCell>
          <Clock $w={74}>10:09 PM<br />8/23/2020</Clock>
          <ShowDesk />
        </Tray>
      </Win7Bar>
      <Popup>
        <PopTitle>Restore pages?<X size={14} color="#5f6368" strokeWidth={2.600} /></PopTitle>
        <PopText>Chrome didn't shut down correctly.</PopText>
        <PopCheck><Box $c="#666" /><span>Help make Google Chrome better by sending crash reports and <a>usage statistics</a> to Google</span></PopCheck>
        <RestoreBtn>Restore</RestoreBtn>
      </Popup>
    </Desktop>
  );
}

const tree = [
  [45, <ShouldStop />, "Should Stop"], [45, <IfIcon />, "If"], [45, <ExistsIcon />, "Element Exists"], [45, <CommentIcon />, "Comment"], [45, <StopIcon />, "Kill Process"], [45, <DelayIcon />, "Delay"], [45, <GlobeIcon />, "Open Browser"],
  [8, 1, "Available"], [29, 0, "App Integration"], [29, 0, "Computer Vision"], [29, 0, "Integrations"], [28, 1, "Orchestrator"],
  [48, 1, "Alerts"], [85, <AlertBox />, "Raise Alert"], [48, 1, "API"], [85, <HttpIcon />, "Orchestrator HTTP Request"], [48, 1, "Assets"],
  [85, <LockIcon />, "Get Asset"], [85, <LockIcon />, "Get Credential"], [85, <LockIcon />, "Set Asset"], [85, <LockIcon />, "Set Credential"], [48, 1, "Jobs"],
  [85, <GearsIcon />, "Get Jobs"], [85, <PlayIcon />, "Start Job"], [85, <StopIcon />, "Stop Job", 1], [48, 1, "Process"], [85, <ShouldStop />, "Should Stop"], [48, 1, "Queues"],
  [85, <QueueIcon />, "Add Queue Item"], [85, <TransIcon />, "Add Transaction Item"], [85, <BulkIcon />, "Bulk Add Queue Items"], [85, <TransIcon c="#e11" a="#e88" />, "Delete Queue Items"], [85, <TransIcon />, "Get Queue Items"],
];

const G = "#5c5c5c", B = "#1976d4";
const ribbon = [
  [30, <S w={24}><path d="M20 14V7l-6-6H3v22h11M13 1v7h7" stroke={G} strokeWidth="1.800" /><path d="M20 17v7M16.500 20.500h7" stroke={B} strokeWidth="2" /></S>, ["New"], 1],
  [34, <S w={24}><path d="M1 1h22v22H5l-4-3z" stroke={G} strokeWidth="2" /><path d="M6 3h12v8H6z" fill="#fff" stroke={B} strokeWidth="1.500" /><path d="M8 6h8M8 8.500h8" stroke={B} /><path d="M6 23v-8h12v8M10 18v5" stroke={G} strokeWidth="1.700" /></S>, ["Save"], 1],
  [52, <S w={24}><path d="M20 10V7l-6-6H3v22h8M13 1v7h7" stroke={G} strokeWidth="1.800" /><path d="M11 23q1-7 7-7v-4l6 6-6 6v-4q-4-1-7 3z" fill={B} /></S>, ["Save as", "Template"]],
  [46, <S w={18} h={24}><path d="M0 0l18 12L0 24z" fill={B} /></S>, ["Debug", "File"], 2],
  "rule5", "edit", "rule",
  [72, <S w={24}><path d="M1 9l5-3 6 4 6-4 5 3-5 3v8l-7 3-6-3v-8z" fill={G} /><path d="M7 8l5-8 5 8h-3v4h-4V8z" fill={B} /><circle cx="18" cy="19" r="5.500" fill={B} stroke="#fff" /><path d="M18 22v-5m-2 2l2-2 2 2" stroke="#fff" strokeWidth="1.300" /></S>, ["Manage", "Packages"]],
  "rule",
  [78, <S w={24}><circle cx="12" cy="12" r="11" stroke={G} strokeWidth="2" /><circle cx="12" cy="12" r="5" fill={B} /></S>, ["Recording"], 1],
  [42, <S w={24}><path d="M1 7h22v13H1zM12 20v3M8 23h8" stroke={G} strokeWidth="1.800" /><path d="M4 9.500h16v8H4z" stroke={B} strokeDasharray="2 1" /></S>, ["Screen", "Scraping"]],
  [60, <S w={24}><path d="M1 1h22v22H1z" stroke={G} strokeWidth="2" strokeDasharray="2 1.500" /><path d="M5 7h14v10H5zM5 10.500h14M5 14h14M10 7v10M15 7v10" stroke={B} strokeWidth="1.400" /></S>, ["Data", "Scraping"], 0, "0 0 0 6px"],
  [46, <S w={24}><path d="M1 1h22v22H1z" stroke={G} strokeWidth="2" /><path d="M4 5h9M4 8h9M4 11h9" stroke={B} strokeDasharray="2 1.200" strokeWidth="1.600" /><ellipse cx="16.500" cy="15.500" rx="4" ry="5" fill={B} /><path d="M12 15h9" stroke="#fff" /></S>, ["User", "Events"], 2, "0 10px 0 0"],
  "rule",
  [66, <S w={24}><path d="M12 0l11 6v12l-11 6L1 18V6z" fill={B} /><path d="M6 7h4v4h5M15 7h3M15 11h3M10 11v6h7" stroke="#fff" strokeWidth="2" /></S>, ["UI", "Explorer"]],
  "rule",
  [108, <S w={24}><circle cx="12" cy="12" r="11" stroke={G} strokeWidth="2" /><path d="M7.500 7.500l9 9M16.500 7.500l-9 9" stroke={B} strokeWidth="3.500" /></S>, ["Remove Unused", "Variables"]],
  "rule",
  [60, <S w={24}><path d="M2 1v6q0 4 4 4t4-4V1M6 11v7q0 5 6 5M20 7v7" stroke={G} strokeWidth="1.900" /><circle cx="20" cy="4" r="2.500" stroke={G} strokeWidth="1.800" /><path d="M16 14h7v9h-7z" stroke={G} strokeWidth="1.800" /></S>, ["Analyze", "File"], 2],
  "rule",
  [64, <S w={24}><path d="M2 3l13-3v24L2 21z" fill={B} /><path d="M17 3h5v18h-5" fill={G} /><path d="M5.500 8l5 8M10.500 8l-5 8" stroke="#fff" strokeWidth="1.700" /></S>, ["Export", "to Excel"]],
  "rule",
  [59, <S w={24}><path d="M1 15v8h22v-8" stroke={G} strokeWidth="2.200" /><path d="M12 0l7 9h-5v9h-4V9H5z" fill={B} /></S>, ["Publish"], 1],
  "rule",
];

const ShotView = ({ click, input }) => (
  <ShotRow>
    <ShotToolBox><ShotTool /></ShotToolBox>
    {input
      ? <InputShot><RedInput>CRM///0/.22724281?TAN</RedInput></InputShot>
      : <Shot $c={click ? 122 : 128}>
        <SCell $edge /><SCell />
        <SCell $hd $p={7}><Tick $s={14} $b={1} $r={3} $mt={-3} /></SCell><SCell $hd $p={8} $nb>TaskName</SCell><SCell $hd $flt><S w={13} h={13}><path d="M0 1h13L8 7v6H5V7z" fill="#333" /></S></SCell><SCell $hd $p={8}>Proc{click ? "e" : ""}</SCell>
        <SCell $edge /><SCell />
        <SCell $tint={click} $p={7}><Tick $s={14} $b={1} $r={3} $mt={17} /></SCell>
        <SCell $tint={click} $p={8} $nb><RedBox $u={click}>Data for manual<br />provisioning</RedBox></SCell><SCell $tint={click} />
        <SCell $tint={click} $p={8} $pt={5}>{click ? "Provi" : "Prov"}<br />{click ? "21:40" : "20:0"}</SCell>
      </Shot>}
    <Burger><i /><i /><i /></Burger>
  </ShotRow>
);

const Head = ({ icon, title, alert, noChev, iw }) => <CardHead><CardIcon $w={iw}>{icon}</CardIcon><span>{title}</span>{alert && <Alert />}{!noChev && <Chev />}</CardHead>;

function Designer() {
  return (
    <Frame>
      <Note>If a BusinessRuleException is thrown, the transaction is skipped.<br />If another kind of exception occurs, the current transaction can be retried.</Note>
      <Plus t={21} b={4} />
      <Card $w={664} $h={1000}>
        <Head icon={<SeqIcon />} title="Sequence" alert />
        <CardCol>
          <Plus t={16} b={4} />
          <Card $w={262} $h={60}>
            <Head noChev icon={<S w={16}><text x="0" y="12" fontSize="8.500" fontWeight="700" fill="#555" fontFamily="Liberation Sans" textLength="15">A+B</text></S>} title="Assign" />
            <AssignRow><Expr $w={110}>out_TimeStart</Expr><span>=</span><Expr $w={110}>DateTime.Now.ToS</Expr></AssignRow>
          </Card>
          <Arrow />
          <Card $w={334} $h={106}><Head icon={<ExistsIcon />} title="Element Exists 'A  #'" /><ShotView /></Card>
          <Arrow />
          <Card $w={580} $h={254}>
            <Head icon={<IfIcon />} title="If" alert />
            <IfBody>
              <CondLabel>Condition</CondLabel>
              <Expr $w={450}>dataprovlink = True</Expr>
              <Branches><div>Then</div><div>Else</div></Branches>
              <Branches>
                <Branch><Card $w={333} $h={106}><Head icon={<ClickIcon />} title="Click 'A  #'" /><ShotView click /></Card></Branch>
                <Branch><StopCard><StopIcon /><span>Stop Job</span><Alert /></StopCard></Branch>
              </Branches>
            </IfBody>
          </Card>
          <Arrow />
          <Card $w={376} $h={400}>
            <Head icon={<SeqIcon />} title="Sequence" />
            <CardCol>
              <Plus t={15} b={5} />
              <Card $w={334} $h={160}><Head icon={<TextIcon />} title="Get Text 'INPUT '" /><ShotView input /></Card>
            </CardCol>
          </Card>
        </CardCol>
      </Card>
    </Frame>
  );
}

const props = [
  ["cat", "Common", 22], ["ContinueOnEr...", "Specifies to cont", 24, "sq"], ["DisplayName", "Stop Job", 23, "plain"], ["Timeout (millis...", "Specifies the amount", 23],
  ["cat", "Input", 22], ["Job", "Specifies the job that", 24], ["Strategy", "StopStrategy.So", 25, "dd"],
  ["cat", "Misc", 22], ["Orchestrator F...", "\"/Default\"", 24, "val"], ["Private", "", 23, "chk"],
];

const ToolButton = ({ item: [w, icon, lines, drop, m] }) => (
  <Tool $w={w} $m={m}>
    {icon}
    {lines.map((t, i) => <ToolLine key={t}>{t}{drop === 2 && i === 1 && <Tri w={6} />}</ToolLine>)}
    {drop === 1 && <small><Tri w={6} /></small>}
  </Tool>
);

const CenterTabs = styled(Tabs)`height:22px;line-height:24px;`;
const PropPanel = styled(Panel)`margin-left:7px;`;
const MainTab = styled.div`width:57px;padding-left:7px;`;
const TabList = styled.div`margin:10px 5px 0 auto;`;
const MenuGap = styled.div`width:${p => p.$w}px;`;

function Studio() {
  return (
    <Desktop>
      <TitleBar>
        <Menu $w={33}>HOME</Menu><MenuGap $w={22} /><Menu $w={64} $on>DESIGN</Menu><MenuGap $w={8} /><Menu $w={56}>DEBUG</Menu>
        <AppTitle>UiPath Studio Pro Community - DATA FOR MANUAL PROVISIONING</AppTitle>
        <RdpBar>
          <PinBtn><S w={12} h={9}><path d="M0 4.500h4M4 1v7M4 4.500h6M11 0v9" stroke="#fff" strokeWidth="2" /></S></PinBtn>
          <S w={12} h={12}><path d="M1 12V8M4.500 12V5M8 12V3M11.500 12V0" stroke="#fff" strokeWidth="1.500" /></S>
          <RdpText>192.168.181.164</RdpText>
          <Caption $w={32}><Dash w={7} h={3} /></Caption><Caption $w={16}><Restore w={9} /></Caption><Caption $w={30}><X size={11} strokeWidth={4} /></Caption>
        </RdpBar>
        <Caption $w={14}><S w={8} h={6}><path d="M0 6l4-5 4 5" stroke="#fff" strokeWidth="2" /></S></Caption>
        <Caption $w={50}><S w={20}><circle cx="10" cy="10" r="9" stroke="#fff" strokeWidth="1.500" /><circle cx="10" cy="7" r="3" fill="#fff" /><path d="M5 16q0-5 5-5t5 5z" fill="#fff" /></S></Caption>
        <Caption $w={26}><Dash w={10} h={1} /></Caption><Caption $w={66}><Restore w={10} /></Caption><Caption $w={24}><X size={14} strokeWidth={1.800} /></Caption>
        <KeyTip>F</KeyTip>
      </TitleBar>
      <Ribbon>
        {ribbon.map((r, i) => typeof r !== "string" ? <ToolButton key={i} item={r} /> : r === "edit"
          ? <EditGroup key={i}><div><Scissors size={13} strokeWidth={1.500} />Cut</div><div><Files size={14} strokeWidth={1.500} />Copy</div><div><Clipboard size={14} strokeWidth={1.500} />Paste</div></EditGroup>
          : <Rule key={i} $ml={r === "rule5" ? 5 : 0} />)}
      </Ribbon>
      <Work>
        <Panel $w={300}>
          <PanelBody>
            <PanelHead>Activities<Dots /><Tri /><Pushpin /></PanelHead>
            <ActTools>
              {["M4 9h6M7 6v6", "M4 9h6"].map(d => <S key={d} w={17}><path d="M1 4h11v11H1zM4 3V1h11v10h-2" stroke="#666" strokeWidth="1.300" /><path d={d} stroke="#444" strokeWidth="1.400" transform="translate(-.5 .5)" /></S>)}
              <Filter size={18} color="#666" strokeWidth={1.700} />
            </ActTools>
            <SearchBox><S w={14}><circle cx="8.500" cy="5.500" r="4.500" stroke="#999" strokeWidth="1.400" /><path d="M5 9l-4 4.500" stroke="#999" strokeWidth="2" /></S>Search activities (Ctrl+Alt+F)</SearchBox>
            <TreeWrap>
              <Tree>{tree.map(([x, ic, t, on], i) => <Node key={i} $x={x} $on={on}><Glyph $w={typeof ic === "number" ? (x === 29 ? 15 : 16) : 21}>{ic === 1 ? <ExpandedArrow /> : ic === 0 ? <CollapsedArrow /> : ic}</Glyph>{t}</Node>)}</Tree>
              <Scroll><ScrollBtn><Tri up c="#aaa" /></ScrollBtn><Thumb $h={476} $mt={90} /><ScrollBtn $mt="auto"><Tri c="#aaa" /></ScrollBtn></Scroll>
            </TreeWrap>
          </PanelBody>
          <Tabs>
            <BTab $w={70}><S w={16} h={13}><path d="M.5 2h6l1 2h8v8.500H.5z" stroke="#666" /></S>Project</BTab>
            <BTab $w={81} $on><S w={15} h={14}><path d="M1 5h13v8H1zM5 5V2h5v3M1 9h4M10 9h4M5 7v3M10 7v3" stroke="#555" /></S>Activities</BTab>
            <BTab $w={90} $pl={8}><S w={15} h={14}><path d="M1 5h7v8H1zM4 5V3h7v8H8M7 3V1h7v8h-3" stroke="#666" /></S>Snippets</BTab>
          </Tabs>
        </Panel>
        <Center>
          <DocTabs><MainTab>Main</MainTab><DocTab>Process *<X size={11} /></DocTab><TabList><Tri c="#888" w={8} /></TabList></DocTabs>
          <Crumb><span>Process</span><div>Expand All</div><div>Collapse All</div></Crumb>
          <CanvasWrap>
            <Canvas><Designer /></Canvas>
            <Scroll $w={18}><ScrollBtn><Tri up c="#aaa" /></ScrollBtn><Thumb $h={156} $mt={42} /><ScrollBtn $mt="auto"><Tri c="#aaa" /></ScrollBtn></Scroll>
          </CanvasWrap>
          <CenterTabs>
            <BTab $w={64}>Variables</BTab><BTab $w={76}>Arguments</BTab><BTab $w={50}>Imports</BTab>
            <ZoomBar>
              <ZItem $w={25}><Hand size={15} fill="#333" strokeWidth={1.500} /></ZItem><ZItem $w={29}><Search size={14} /></ZItem><ZItem $w={59}>100%</ZItem><ZItem $w={27}><Tri w={8} /></ZItem>
              <ZItem $w={24}><S w={15}><path d="M0 0h6v6H0zM9 0h6v6H9zM0 9h6v6H0zM9 9h6v6H9zM4 4h7v7H4z" fill="#444" /></S></ZItem>
              <ZItem $w={15}><S w={15}><path d="M1 5V1h4M10 1h4v4M14 10v4h-4M5 14H1v-4M5 5h5v5H5z" stroke="#333" strokeWidth="1.800" /></S></ZItem>
            </ZoomBar>
          </CenterTabs>
        </Center>
        <PropPanel $w={246}>
          <PanelBody $bg="#fff">
            <PanelHead>Properties<Dots /><Tri /><Pushpin /></PanelHead>
            <PropHead>UiPath.Core.Activities.StopJob</PropHead>
            {props.map(([l, v, h, k]) => l === "cat"
              ? <Cat key={v} $h={h}><S w={9}><path d="M.5.5h8v8h-8zM2.500 4.500h4" stroke="#222" /></S>{v}</Cat>
              : <Prop key={l} $h={h}><div /><div>{l}</div><div>
                {k === "plain" ? <PText>{v}</PText> : k === "chk" ? <><MenuGap $w={4} /><Box $s={14} $b={1} /></>
                  : <><PInput $ph={!k || k === "sq"}>{v}</PInput>
                    {k === "sq" && <PBtn $w={14} $h={14} $ml={3}><S w={8}><rect width="8" height="8" fill="#222" /></S></PBtn>}
                    {k === "dd" && <PBtn $w={16} $h={18}><Tri c="#222" w={6} /></PBtn>}
                    <PBtn $bg={k ? "#fff" : "#ededed"}>...</PBtn></>}
              </div></Prop>)}
          </PanelBody>
          <Tabs>
            <BTab $w={60} $on><S w={15}><path d="M2 13l6-6M8 7a3.500 3.500 0 115-5l-3 3" stroke="#555" strokeWidth="2" /></S>Pro...</BTab>
            <BTab $w={66} $pl={12}><S w={13}><path d="M1 1h8v11H1zM3 4h4M3 7h4" stroke="#666" /></S>Out...</BTab>
            <BTab $w={70} $pl={4}>Resou...</BTab><BTab $w={50} $pl={4}><S w={13}><path d="M1 2h11v9H1z" stroke="#666" strokeWidth="1.500" /></S>UI...</BTab>
          </Tabs>
        </PropPanel>
        <SideDock>
          <Vertical><S w={15} h={14}><path d="M1 1h11v12H1zM12 4l3 3-3 3" stroke="#555" strokeWidth="1.300" /><path d="M3 8h2v3M7 5h3v6" stroke={B} strokeWidth="1.500" /></S><div>Activity Coverage</div></Vertical>
          <DockStrip />
        </SideDock>
      </Work>
      <OutTabs><OutTab $w={50}>Output</OutTab><OutTab $w={58}>Error List</OutTab><OutTab $w={95}>Find References</OutTab><OutTab $w={80}>Breakpoints</OutTab></OutTabs>
      <Watermark>Activate Windows</Watermark>
      <Status><Settings size={12} /><StatusItem $ml={16}>●</StatusItem><StatusItem $ml={5}>Orchestrator, Default ▾</StatusItem><StatusItem $ml={25}>✚ Add To Source Control ▴</StatusItem></Status>
      <Win10Bar>
        <Cell10><S w={16}><path d="M0 0h7.500v7.500H0zM8.500 0H16v7.500H8.500zM0 8.500h7.500V16H0zM8.500 8.500H16V16H8.500z" fill="#fff" /></S></Cell10>
        <Cell10><Search size={17} /></Cell10>
        <Cell10><S w={20} h={14}><path d="M4 1h12v12H4zM1 3v8M19 3v8" stroke="#fff" strokeWidth="1.400" /></S></Cell10>
        <Cell10 $run><S w={24} h={20}><path d="M1 2h9l2 3h11v14H1z" fill="#f8d775" /><path d="M5 19v-7h14v7" stroke="#3b9de0" strokeWidth="3" /></S></Cell10>
        <Cell10 $run><ChromeLogo w={22} /></Cell10>
        <Cell10 $bg="#c96a12"><Settings size={20} /></Cell10>
        <Cell10 $run><UiBadge $s={23}>Ui</UiBadge></Cell10>
        <Cell10 $run><S w={22} h={18}><rect width="22" height="18" fill="#dfefff" /><rect x="2" y="3" width="8" height="12" fill="#2a80d0" /><path d="M12 5h8M12 9h8M12 13h8" stroke="#2a80d0" /></S></Cell10>
        <Cell10 $run><S w={22} vb="0 0 32 32"><path d="M9 3h19l-6 24H3z" fill="#8fc9d8" /><path d="M3 27h19l2 2H5z" fill="#e6eef0" /></S></Cell10>
        <Cell10 $run $bg="#3a3a3c"><UiBadge $s={23}>Ui</UiBadge></Cell10>
        <Tray>
          <TrayCell><S w={11} h={7}><path d="M1 6l4.500-5L10 6" stroke="#fff" strokeWidth="1.300" /></S></TrayCell>
          <TrayCell><Monitor size={15} /></TrayCell><TrayCell><Wifi size={15} /></TrayCell>
          <Clock $w={66}>10:09 PM<br />8/23/2020</Clock>
          <TrayCell $w={44}><S w={16}><path d="M1 1h14v11H8l-3 3v-3H1zM4 5h8M4 8h8" stroke="#fff" /></S></TrayCell>
          <TrayCell $w={8} />
        </Tray>
      </Win10Bar>
    </Desktop>
  );
}

export default function App() {
  return <><Global /><Screens><Browser /><Studio /></Screens></>;
}
